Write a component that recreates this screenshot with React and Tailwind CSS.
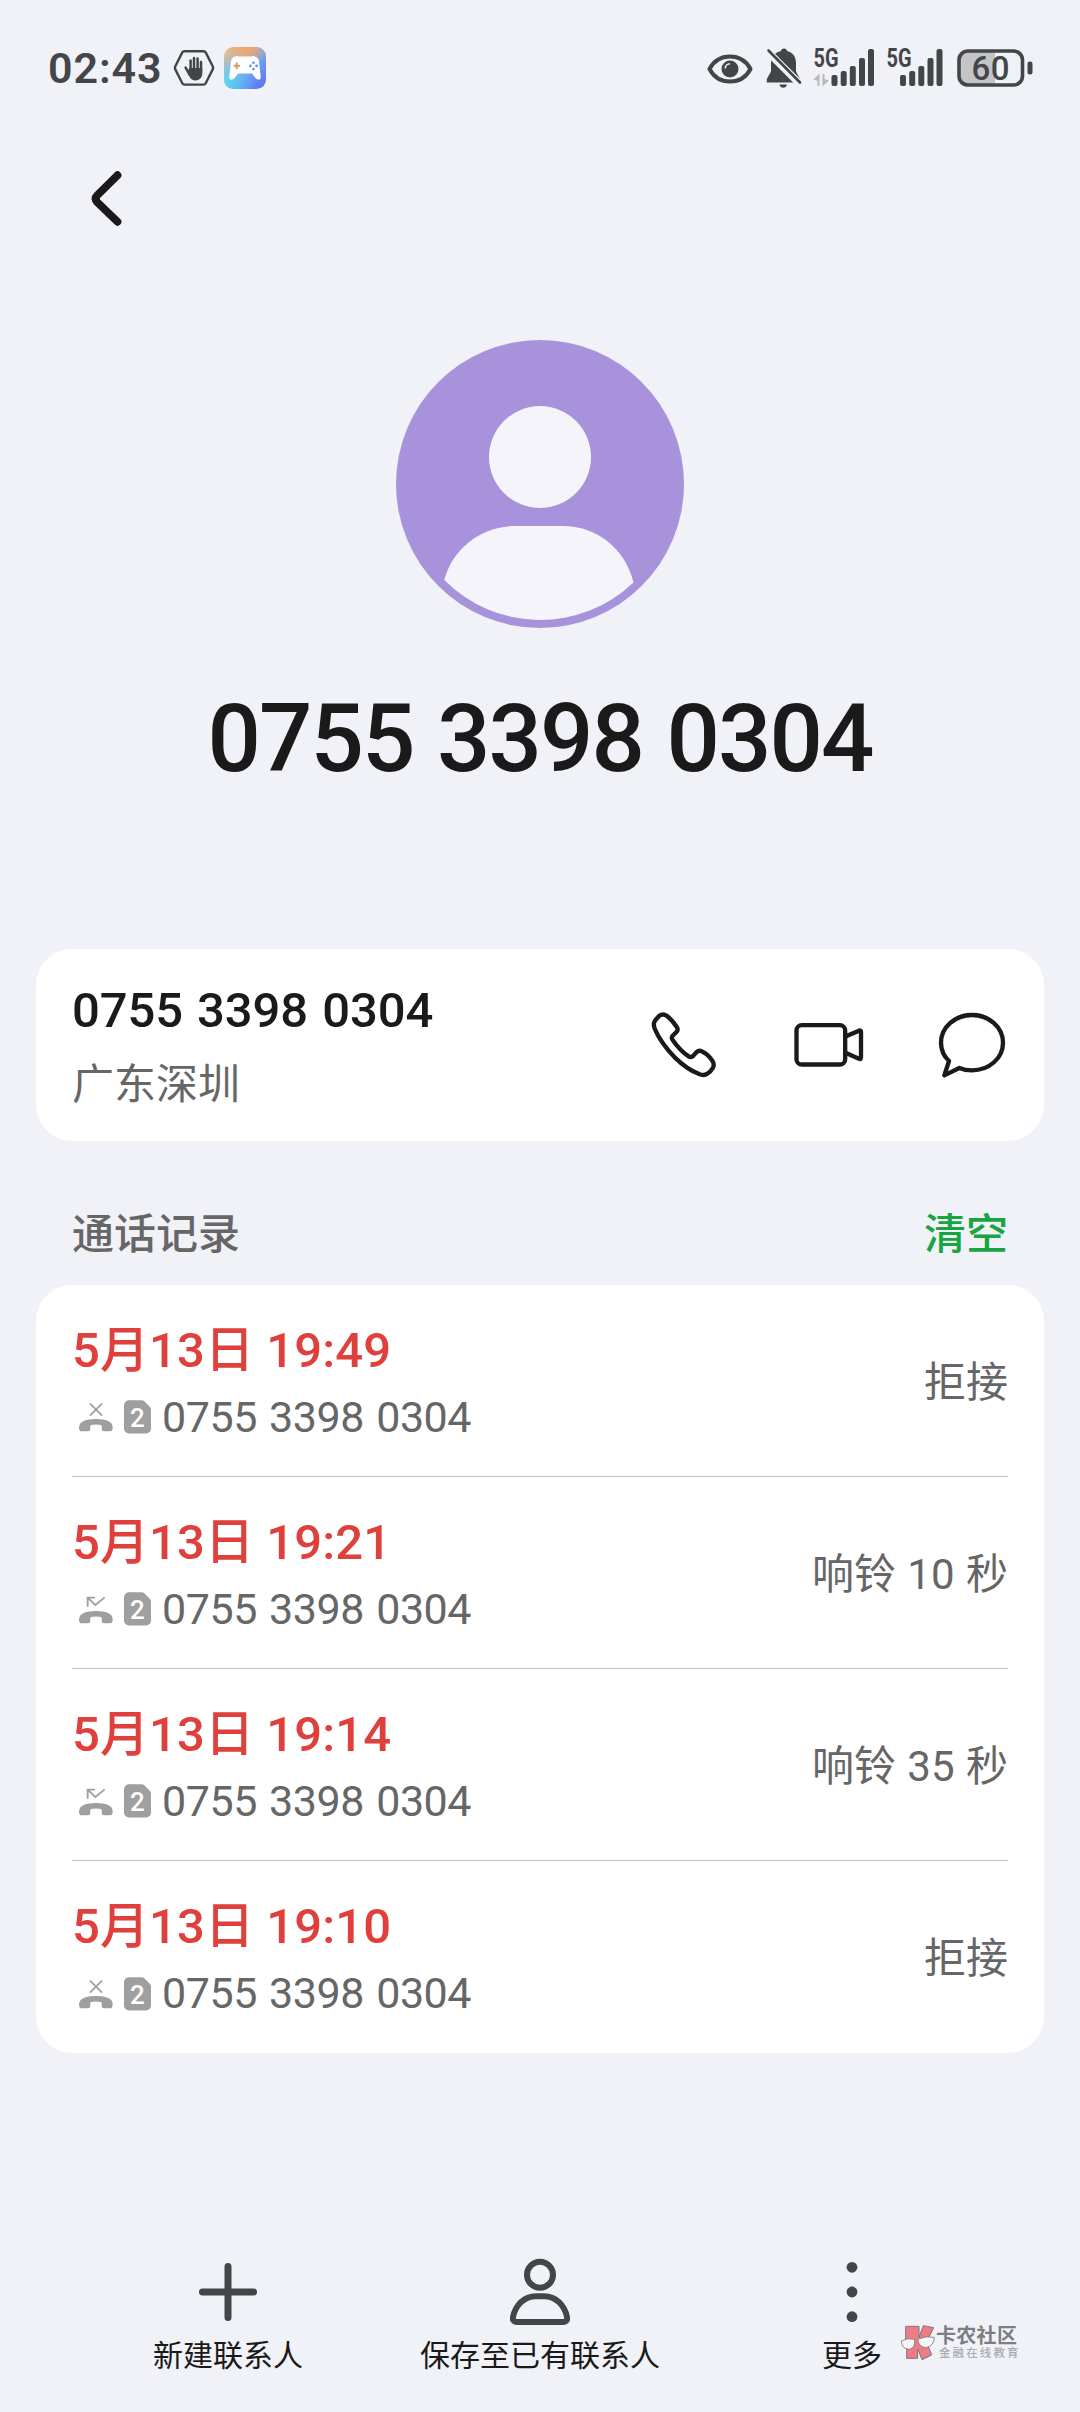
const records = [
  { id: 1, time: "5月13日 19:49", type: "rejected", note: "拒接" },
  { id: 2, time: "5月13日 19:21", type: "missed", note: "响铃 10 秒" },
  { id: 3, time: "5月13日 19:14", type: "missed", note: "响铃 35 秒" },
  { id: 4, time: "5月13日 19:10", type: "rejected", note: "拒接" },
];

const phoneNumber = "0755 3398 0304";

const HandIcon = () => (
  <svg width="42" height="38" viewBox="0 0 42 38" fill="none">
    <path
      d="M11.5 2.2h19a2.5 2.5 0 0 1 2.2 1.2l7 13.8a3.5 3.5 0 0 1 0 3.2l-7 13.8a2.5 2.5 0 0 1-2.2 1.4h-19a2.5 2.5 0 0 1-2.2-1.4l-7-13.8a3.5 3.5 0 0 1 0-3.2l7-13.8a2.5 2.5 0 0 1 2.2-1.2z"
      stroke="#444548"
      strokeWidth="2.4"
    />
    <path
      d="M17.6 11.5v9M21 9v11M24.6 9.5v11M28 13v9M12.6 18.6l4 7"
      stroke="#444548"
      strokeWidth="2.5"
      strokeLinecap="round"
    />
    <path
      d="M16.3 19h13v5.5c0 4-3 7-6.8 7-3 0-4.7-1.5-6.2-4l-2-4z"
      fill="#444548"
    />
  </svg>
);

const GameIcon = () => (
  <svg width="42" height="42" viewBox="0 0 42 42">
    <defs>
      <linearGradient id="gameBase" x1="0" y1="0" x2="1" y2="1">
        <stop offset="0" stopColor="#f5c07c" />
        <stop offset="0.35" stopColor="#b9b4cf" />
        <stop offset="0.62" stopColor="#6c9df2" />
        <stop offset="1" stopColor="#5b6cf0" />
      </linearGradient>
      <radialGradient id="gameTop" cx="0.55" cy="0" r="0.5">
        <stop offset="0" stopColor="#f6a25e" />
        <stop offset="1" stopColor="#f6a25e" stopOpacity="0" />
      </radialGradient>
      <radialGradient id="gameLeft" cx="0" cy="0.9" r="0.75">
        <stop offset="0" stopColor="#52dcf5" />
        <stop offset="1" stopColor="#52c8f5" stopOpacity="0" />
      </radialGradient>
    </defs>
    <rect width="42" height="42" rx="9.5" fill="url(#gameBase)" />
    <rect width="42" height="42" rx="9.5" fill="url(#gameTop)" />
    <rect width="42" height="42" rx="9.5" fill="url(#gameLeft)" />
    <path
      d="M11 9.5q2-1 3.5 0h13q1.5-1 3.5 0 3.5 1 4 4.500l1.7 16q.2 3-2.5 2.500-2 0-4-3l-2.200-3H14l-2.200 3q-2 3-4 3-2.700.5-2.500-2.500L7 14q.5-3.500 4-4.500z"
      fill="#fff"
    />
    <path d="M9.5 18.8h6.5M12.7 15.5v6.5" stroke="#d39a6c" strokeWidth="2" />
    <g fill="#5b8ed8">
      <circle cx="29.5" cy="15.8" r="1.3" />
      <circle cx="29.5" cy="22" r="1.3" />
      <circle cx="26.4" cy="18.9" r="1.3" />
      <circle cx="32.6" cy="18.9" r="1.3" />
    </g>
  </svg>
);

const EyeIcon = () => (
  <svg width="46" height="32" viewBox="0 0 46 32" fill="none">
    <path
      d="M2.5 16C7 7.500 14.500 3.500 23 3.500S39 7.500 43.500 16C39 24.500 31.500 28.500 23 28.500S7 24.500 2.500 16z"
      stroke="#444548"
      strokeWidth="4"
      strokeLinejoin="round"
    />
    <circle cx="23" cy="16" r="8.5" fill="#444548" />
    <path d="M18.2 15.5a5 5 0 0 1 4.800-4.800" stroke="#f1f2f7" strokeWidth="1.6" />
  </svg>
);

const BellOffIcon = () => (
  <svg width="36" height="42" viewBox="0 0 36 42" fill="none">
    <path
      d="M18 1.500c1.700 0 2.800 1 3.200 2.600 5.500 1.400 8.800 5.900 8.800 11.900v8.500l4 7.500v3.500H.8v-3.500L5 24.500V16c0-6 4.300-10.500 9.800-11.900C15.200 2.500 16.300 1.500 18 1.500z"
      fill="#444548"
    />
    <path d="M13.500 37.500h7.500q-1 3.200-3.800 3.200t-3.700-3.200z" fill="#444548" />
    <path d="M-1 2L38 41" stroke="#f1f2f7" strokeWidth="7.5" />
    <path d="M2.5 3.500L34 35.500" stroke="#444548" strokeWidth="2.6" strokeLinecap="round" />
  </svg>
);

// the sim with mobile data shows the small arrows, so its bars start further right
const SignalIcon = ({ data }) => (
  <svg width="62" height="56" viewBox="0 -8 62 56">
    <text
      x="0.5"
      y="19"
      fontFamily="Roboto, sans-serif"
      fontSize="25"
      fontWeight="700"
      fill="#444548"
      textLength="25"
      lengthAdjust="spacingAndGlyphs"
    >
      5G
    </text>
    {data && (
      <path d="M.5 31.500l6-6v12.500h-2v-5zM16 32.500l-6.500 6V26h2v5z" fill="#b9babd" />
    )}
    <g fill="#444548" transform={data ? undefined : "translate(-4.500 0)"}>
      <rect x="18.5" y="27" width="6" height="11" rx="2" />
      <rect x="27.7" y="23" width="6" height="15" rx="2" />
      <rect x="36.8" y="18" width="6" height="20" rx="2" />
      <rect x="46" y="10" width="6" height="28" rx="2" />
      <rect x="55" y="1" width="6" height="37" rx="2" />
    </g>
  </svg>
);

const BatteryIcon = () => (
  <svg width="76" height="38" viewBox="0 0 76 38">
    <path d="M11 2h27v34H11a9 9 0 0 1-9-9V11a9 9 0 0 1 9-9z" fill="#c3c4c7" />
    <rect x="2" y="2" width="63.5" height="34" rx="9" fill="none" stroke="#444548" strokeWidth="3.6" />
    <rect x="70.5" y="12.5" width="5" height="13" rx="2.3" fill="#444548" />
    <text
      x="33.8"
      y="30.9"
      textAnchor="middle"
      fontFamily="Roboto, sans-serif"
      fontSize="33"
      fontWeight="500"
      letterSpacing="0.5"
      fill="#444548"
    >
      60
    </text>
  </svg>
);

const StatusBar = () => (
  <div className="flex h-[136px] items-center justify-between pr-[47px] pl-[48px]">
    <div className="flex items-center">
      <span className="w-[125px] pt-px text-[43px] leading-none font-semibold tracking-[0.9px] text-[#444548]">
        02:43
      </span>
      <HandIcon />
      <span className="ml-[9px]">
        <GameIcon />
      </span>
    </div>
    <div className="flex items-center">
      <span className="pt-[2px]">
        <EyeIcon />
      </span>
      <span className="ml-[13px]">
        <BellOffIcon />
      </span>
      <span className="ml-[11px]">
        <SignalIcon data />
      </span>
      <span className="ml-[11px]">
        <SignalIcon />
      </span>
      <span className="ml-[9px]">
        <BatteryIcon />
      </span>
    </div>
  </div>
);

const Avatar = () => (
  <svg width="288" height="288" viewBox="396 340 288 288">
    <circle cx="540" cy="484" r="144" fill="#a792db" />
    <circle cx="540" cy="457" r="51" fill="#f5f4fb" />
    <path
      d="M515 526h48c33 0 62 22 70.500 56.500A135 135 0 0 1 444.300 580C452 549 481 526 515 526z"
      fill="#f5f4fb"
    />
  </svg>
);

const actionClass = "block size-[70px] fill-none stroke-[#1a1a1a] [stroke-linejoin:round] [stroke-linecap:round]";

const ContactActions = () => (
  <div className="flex gap-[74px]">
    <svg className={actionClass} viewBox="90 90 210 210" strokeWidth="13">
      <path d="M117 108Q129 99 141 108Q158 121 171 142Q175 149 170 155L158 167Q153 173 158 180Q180 212 207 230Q213 233 219 228L230 216Q237 210 245 214Q263 222 277 242Q284 252 279 263Q272 276 259 283Q250 287 239 283Q201 268 164 232Q122 188 105 148Q98 132 105 122Z" />
    </svg>
    <svg className={actionClass} viewBox="522 90 210 210" strokeWidth="13">
      <rect x="529.5" y="135.5" width="146" height="118" rx="16" />
      <path d="M678 169L717 152Q723 150 723 156V232Q723 239 717 236L678 219" />
    </svg>
    <svg className={actionClass} viewBox="954 90 210 210" strokeWidth="13">
      <path d="M987 243Q963 220 963 188C963 142 1004 105 1056 105S1149 142 1149 188S1108 271 1056 271Q1035 271 1018 264L973 286Z" />
    </svg>
  </div>
);

const CallTypeIcon = ({ type }) => (
  <svg width="36" height="34" viewBox="144 597 108 102" fill="none" stroke="#9f9f9f" strokeWidth="5.5">
    {type === "rejected" ? (
      <path d="M180 608L216 644M216 608L180 644" />
    ) : (
      <path d="M173 641V614H195M173 614L196 636L224 613" />
    )}
    <path
      d="M147 680Q147 654 198 654T248 680Q248 691 239 691H222Q215 691 215 684V673Q198 668 181 673V684Q181 691 174 691H156Q147 691 147 680Z"
      fill="#9f9f9f"
      stroke="none"
    />
  </svg>
);

const SimIcon = () => (
  <svg width="27" height="34" viewBox="0 0 27 34">
    <path
      d="M5 0.300h12.500q1.800 0 3 1.200l5.300 5.300q1.200 1.200 1.200 3V28.500a5 5 0 0 1-5 5H5a5 5 0 0 1-5-5V5.300a5 5 0 0 1 5-5z"
      fill="#9f9f9f"
    />
    <text
      x="13.5"
      y="27"
      textAnchor="middle"
      fontFamily="Roboto, sans-serif"
      fontSize="26"
      fontWeight="500"
      fill="#fff"
    >
      2
    </text>
  </svg>
);

const RecordRow = ({ record, last }) => (
  <div
    className={
      last
        ? "flex h-48 items-center justify-between"
        : "flex h-48 items-center justify-between border-b border-[#bfbfc1]"
    }
  >
    <div className="pt-[6px]">
      <p className="text-[49px] leading-[67px] font-medium tracking-[0.1px] text-[#e0403c]">
        {record.time}
      </p>
      <div className="flex h-[67px] items-center pl-1.5">
        <CallTypeIcon type={record.type} />
        <span className="ml-[10px]">
          <SimIcon />
        </span>
        <span className="ml-[11px] text-[43px] leading-[67px] tracking-[-0.45px] text-[#666] [word-spacing:2px]">
          {phoneNumber}
        </span>
      </div>
    </div>
    <span className="pt-[3px] text-[42px] text-[#666] [word-spacing:1px]">{record.note}</span>
  </div>
);

const BottomItem = ({ label, children }) => (
  <div className="flex flex-col items-center">
    <svg width="70" height="70" viewBox="0 0 70 70" fill="none">
      {children}
    </svg>
    <span className="mt-[6px] text-[30px] leading-[46px] whitespace-nowrap text-[#1a1a1a]">
      {label}
    </span>
  </div>
);

const Watermark = () => (
  <div className="absolute top-[2324px] left-[900px] flex items-start">
    <svg width="35" height="36" viewBox="358 252 105 108">
      <g fill="#ee7c84" stroke="#77787d" strokeWidth="3" strokeLinejoin="round">
        <path d="M375 259H415V292L428 257L459 263L438 306L453 345L424 359L411 326V355H378V326L375 300Z" />
      </g>
      <g fill="#f6f6fa" stroke="#77787d" strokeWidth="2.5">
        <path d="M362 303Q380 292 402 298Q404 325 386 328Q364 328 362 303Z" />
        <path d="M411 298Q436 286 461 292Q460 318 437 323Q414 322 411 298Z" />
      </g>
    </svg>
    <div className="ml-[1px] whitespace-nowrap">
      <p className="pt-px text-[20px] leading-[23px] font-bold tracking-[0.3px] text-[#7d7e83]">卡农社区</p>
      <p className="pl-[3px] text-[11.5px] leading-[11px] font-medium tracking-[2.1px] text-[#a9aaae]">金融在线教育</p>
    </div>
  </div>
);

const App = () => {
  return (
    <div className="relative flex h-[2412px] w-[1080px] flex-col overflow-hidden bg-[#f1f2f7] font-[Roboto,'Noto_Sans_CJK_SC',sans-serif]">
      <StatusBar />

      <div className="flex h-[124px] items-center px-[84px]">
        <svg width="40" height="60" viewBox="84 168 40 60" fill="none">
          <path
            d="M117.500 175.200L97.300 195.300Q94 198.800 97.300 202.300L117.500 221.800"
            stroke="#1a1a1a"
            strokeWidth="7.8"
            strokeLinecap="round"
          />
        </svg>
      </div>

      <div className="mt-20 flex flex-col items-center">
        <Avatar />
        <h1 className="mt-[61px] text-[94px] leading-[100px] font-medium tracking-[-1.9px] text-[#1a1a1a] [word-spacing:2px]">
          {phoneNumber}
        </h1>
      </div>

      <div className="mx-9 mt-[160px] flex h-48 items-center justify-between rounded-[36px] bg-white px-9">
        <div className="pt-[6px]">
          <p className="text-[49px] leading-[74px] font-medium tracking-[-0.1px] text-[#1a1a1a] [word-spacing:2px]">
            {phoneNumber}
          </p>
          <p className="text-[42px] leading-[74px] text-[#666]">广东深圳</p>
        </div>
        <ContactActions />
      </div>

      <div className="flex h-36 items-end justify-between px-[72px] pb-[18px] text-[42px] leading-[64px] font-medium">
        <span className="text-[#666]">通话记录</span>
        <button className="cursor-pointer text-[#17a542]">清空</button>
      </div>

      <div className="mx-9 rounded-[36px] bg-white px-9">
        {records.map((record, index) => (
          <RecordRow key={record.id} record={record} last={index === records.length - 1} />
        ))}
      </div>

      <div className="mt-[204px] grid grid-cols-3 px-[72px]">
        <BottomItem label="新建联系人">
          <path d="M35 9.500V60.500M9.500 35H60.500" stroke="#444548" strokeWidth="7" strokeLinecap="round" />
        </BottomItem>
        <BottomItem label="保存至已有联系人">
          <circle cx="35" cy="17.7" r="13" stroke="#444548" strokeWidth="6" />
          <path
            d="M31 39.200h8c12 0 20.500 9 23 20.800.6 3-.8 5-3.500 5h-47c-2.700 0-4.100-2-3.500-5 2.500-11.800 11-20.800 23-20.800z"
            stroke="#444548"
            strokeWidth="6"
          />
        </BottomItem>
        <BottomItem label="更多">
          <g fill="#444548">
            <circle cx="35" cy="10.3" r="5.4" />
            <circle cx="35" cy="35" r="5.4" />
            <circle cx="35" cy="59.7" r="5.4" />
          </g>
        </BottomItem>
      </div>

      <Watermark />
    </div>
  );
};

export default App;
